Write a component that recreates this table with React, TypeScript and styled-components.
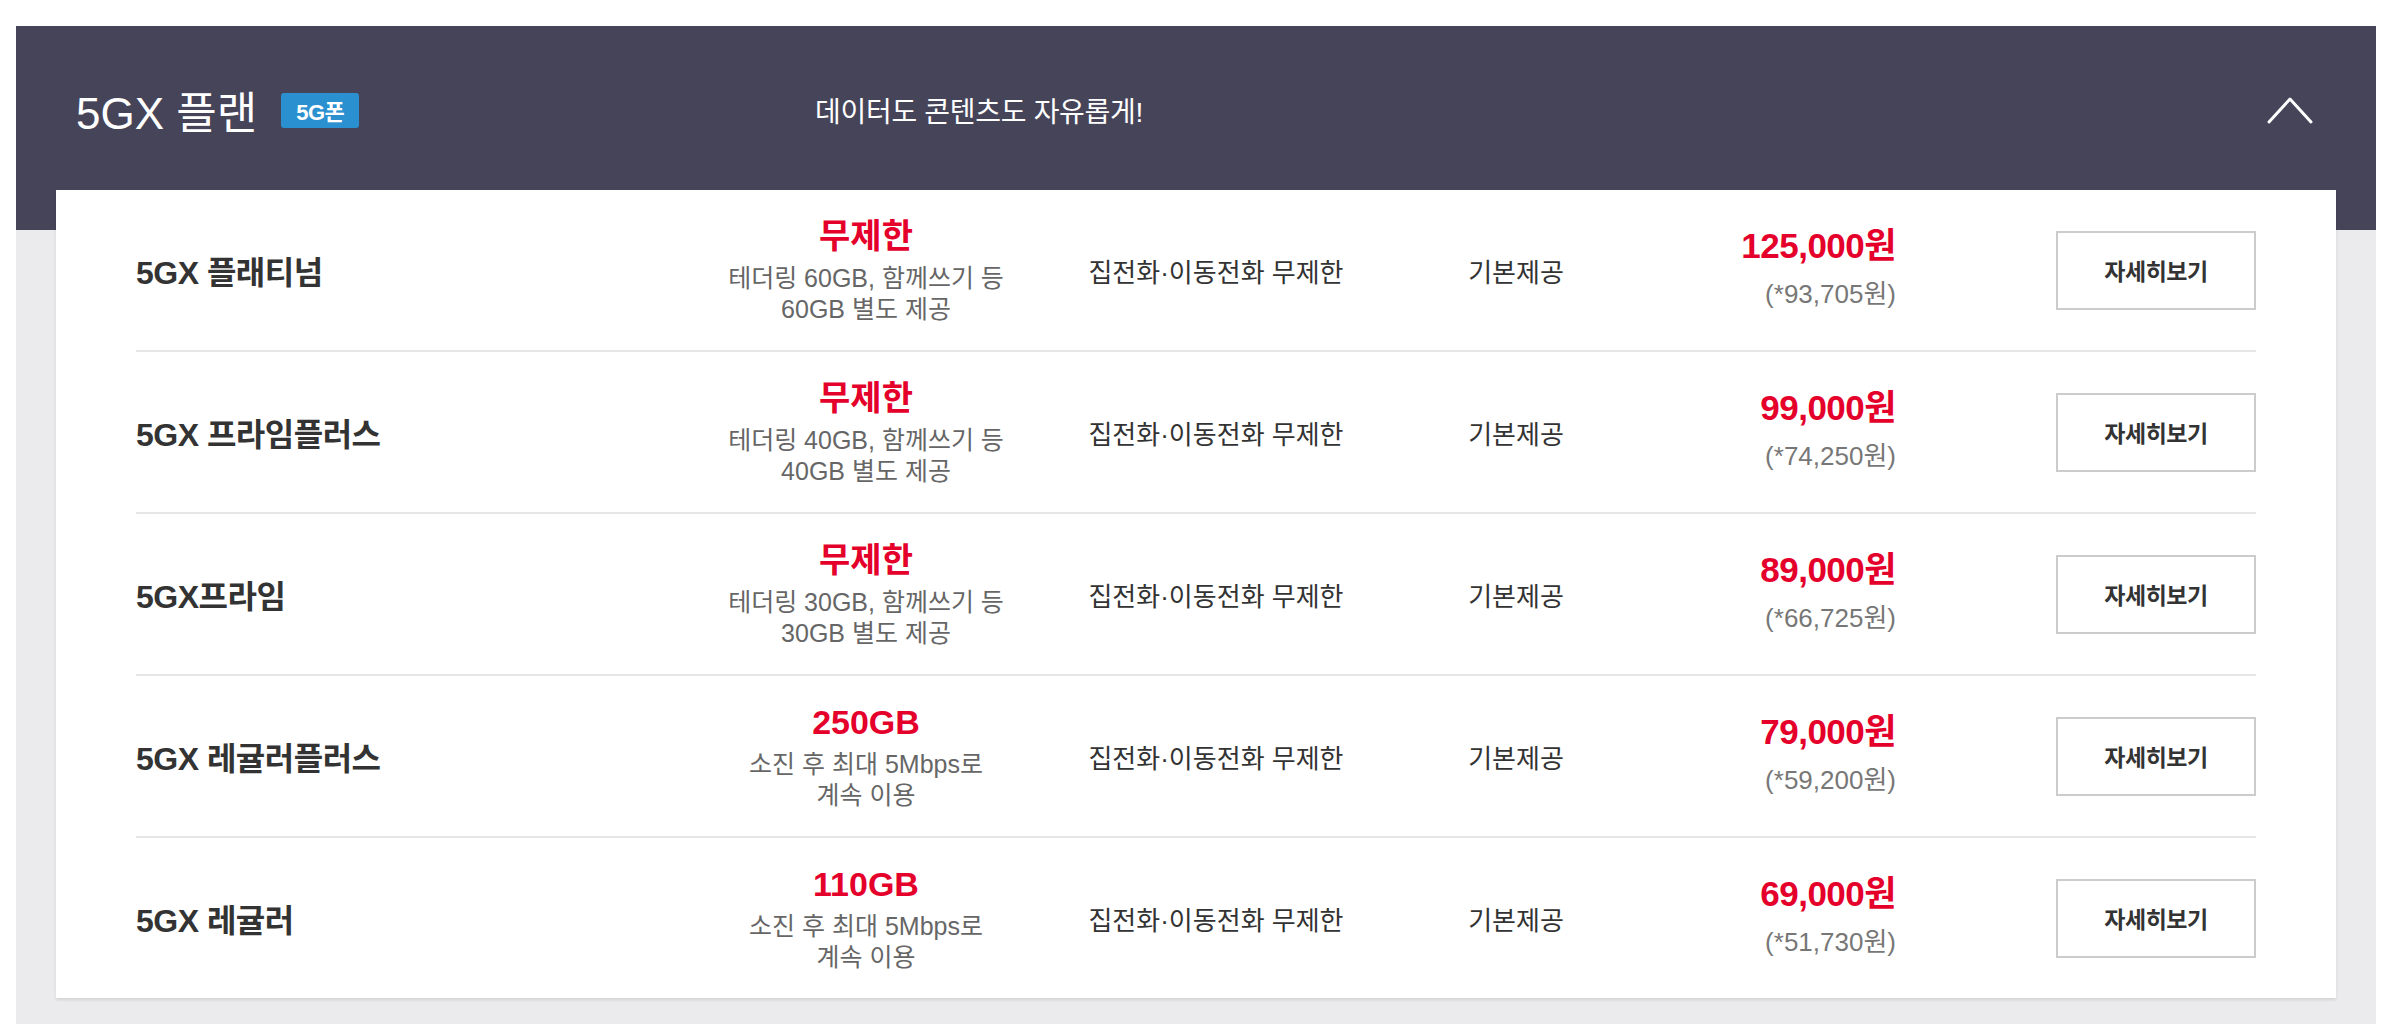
import React from "react";
import styled, { createGlobalStyle } from "styled-components";

const GlobalStyle = createGlobalStyle`
  body {
    margin: 0;
    background: #fff;
    font-family: "Liberation Sans", "Noto Sans CJK KR", sans-serif;
  }
`;

const Section = styled.section`
  width: 2360px;
  margin: 26px 0 0 16px;
  background: #ebebed;
`;

const Header = styled.header`
  display: flex;
  align-items: center;
  height: 164px;
  padding: 4px 63px 0 60px;
  box-sizing: border-box;
  background: #464459;
  color: #fff;
`;

const TitleGroup = styled.div`
  display: flex;
  align-items: center;
  flex: 0 0 739px;
`;

const Title = styled.h2`
  margin: 0;
  font-size: 44px;
  font-weight: 400;
`;

const Badge = styled.span`
  display: inline-flex;
  align-items: center;
  justify-content: center;
  width: 78px;
  height: 35px;
  margin-left: 24px;
  border-radius: 3px;
  background: #2a90d0;
  font-size: 22px;
  font-weight: 700;
  letter-spacing: -0.5px;
`;

const Subtitle = styled.p`
  flex: 1;
  margin: 0;
  font-size: 28px;
  letter-spacing: -0.3px;
`;

const Toggle = styled.button`
  display: flex;
  padding: 0;
  border: 0;
  background: none;
  cursor: pointer;
`;

const Body = styled.div`
  padding: 0 40px 26px;
  background: linear-gradient(to bottom, #464459 40px, #ebebed 40px);
`;

const Card = styled.div`
  padding: 0 80px;
  background: #fff;
  box-shadow: 0 2px 3px rgba(0, 0, 0, 0.1);
`;

const Row = styled.div`
  display: grid;
  grid-template-columns: 550px 360px 340px 260px 250px 1fr;
  align-items: center;
  height: 160px;
  border-bottom: 2px solid #e6e6e6;
  &:last-child {
    border-bottom: 0;
  }
`;

const Name = styled.div`
  font-size: 32px;
  font-weight: 700;
  color: #333;
  letter-spacing: -0.5px;
`;

const Data = styled.div`
  display: flex;
  flex-direction: column;
  align-items: center;
  text-align: center;
`;

const DataMain = styled.strong`
  font-size: 34px;
  line-height: 40px;
  color: #e4002b;
  margin-bottom: 7px;
`;

const DataNote = styled.span`
  font-size: 25px;
  line-height: 31px;
  color: #666;
`;

const Cell = styled.div`
  text-align: center;
  font-size: 26px;
  color: #333;
`;

const Price = styled.div`
  display: flex;
  flex-direction: column;
  align-items: flex-end;
  gap: 8px;
`;

const Amount = styled.strong`
  font-size: 35px;
  line-height: 40px;
  color: #e4002b;
  letter-spacing: -0.5px;
`;

const Discount = styled.span`
  font-size: 26px;
  line-height: 40px;
  color: #777;
`;

const DetailButton = styled.button`
  justify-self: end;
  width: 200px;
  height: 79px;
  border: 2px solid #cccccc;
  background: #fff;
  font-family: inherit;
  font-size: 23px;
  font-weight: 700;
  color: #333;
  letter-spacing: -0.5px;
  cursor: pointer;
`;

type Plan = {
  name: string;
  data: string;
  note: [string, string];
  price: string;
  discount: string;
};

const plans: Plan[] = [
  { name: "5GX 플래티넘", data: "무제한", note: ["테더링 60GB, 함께쓰기 등", "60GB 별도 제공"], price: "125,000원", discount: "(*93,705원)" },
  { name: "5GX 프라임플러스", data: "무제한", note: ["테더링 40GB, 함께쓰기 등", "40GB 별도 제공"], price: "99,000원", discount: "(*74,250원)" },
  { name: "5GX프라임", data: "무제한", note: ["테더링 30GB, 함께쓰기 등", "30GB 별도 제공"], price: "89,000원", discount: "(*66,725원)" },
  { name: "5GX 레귤러플러스", data: "250GB", note: ["소진 후 최대 5Mbps로", "계속 이용"], price: "79,000원", discount: "(*59,200원)" },
  { name: "5GX 레귤러", data: "110GB", note: ["소진 후 최대 5Mbps로", "계속 이용"], price: "69,000원", discount: "(*51,730원)" },
];

function ChevronUp() {
  return (
    <svg width="46" height="28" viewBox="0 0 46 28" fill="none">
      <polyline points="2,26 23,3 44,26" stroke="#fff" strokeWidth="3" strokeLinecap="round" strokeLinejoin="round" />
    </svg>
  );
}

function PlanRow({ plan }: { plan: Plan }) {
  return (
    <Row>
      <Name>{plan.name}</Name>
      <Data>
        <DataMain>{plan.data}</DataMain>
        <DataNote>{plan.note[0]}</DataNote>
        <DataNote>{plan.note[1]}</DataNote>
      </Data>
      <Cell>집전화·이동전화 무제한</Cell>
      <Cell>기본제공</Cell>
      <Price>
        <Amount>{plan.price}</Amount>
        <Discount>{plan.discount}</Discount>
      </Price>
      <DetailButton>자세히보기</DetailButton>
    </Row>
  );
}

export default function App() {
  return (
    <>
      <GlobalStyle />
      <Section>
        <Header>
          <TitleGroup>
            <Title>5GX 플랜</Title>
            <Badge>5G폰</Badge>
          </TitleGroup>
          <Subtitle>데이터도 콘텐츠도 자유롭게!</Subtitle>
          <Toggle aria-label="접기">
            <ChevronUp />
          </Toggle>
        </Header>
        <Body>
          <Card>
            {plans.map((p) => (
              <PlanRow key={p.name} plan={p} />
            ))}
          </Card>
        </Body>
      </Section>
    </>
  );
}
